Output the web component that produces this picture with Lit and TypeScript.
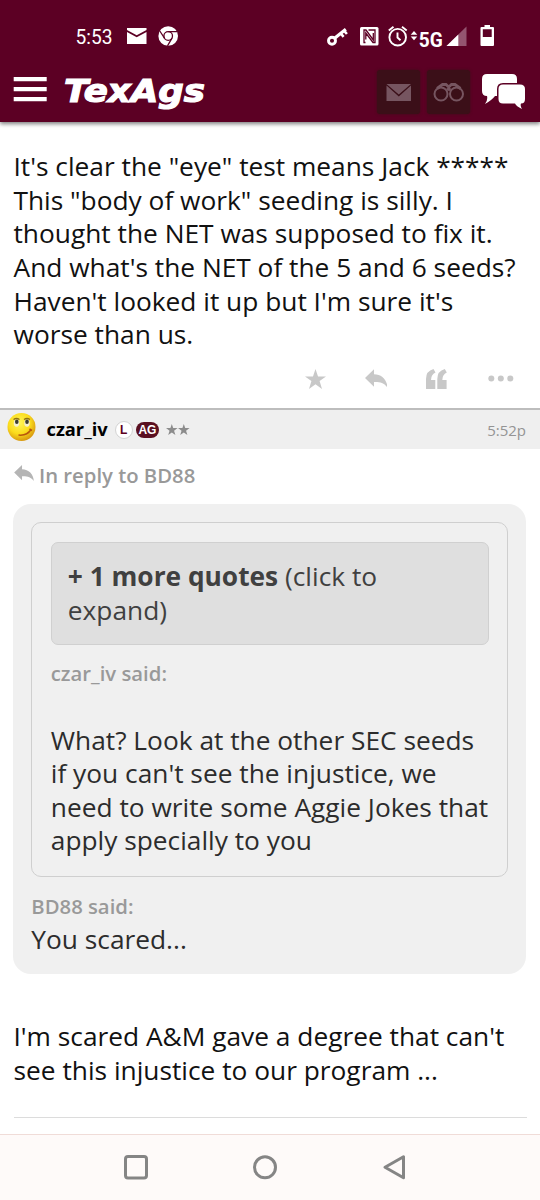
import { LitElement, html, css } from "lit";
import { customElement } from "lit/decorators.js";

const REPLY = "M0 8.2 L8.6 0 V4.6 C16 4.8 21 9.5 21.5 17.5 C18.5 13.2 14.5 12 8.6 12.2 V16.6 Z";
const STAR = "M10 0 L12.4 7 H20 L13.9 11.5 L16.2 19 L10 14.5 L3.8 19 L6.1 11.5 L0 7 H7.6 Z";

const lines = (items: string[]) => items.map((t) => html`<div class="line">${t}</div>`);

@customElement("status-bar")
class StatusBar extends LitElement {
  static styles = css`
    :host { display: block; height: 70px; }
    svg { display: block; }
    .t { font-family: Roboto, sans-serif; fill: #fff; }
  `;
  render() {
    return html`<svg width="540" height="70" viewBox="0 0 540 70" fill="#fff">
      <text class="t" x="75.5" y="43.5" font-size="20" textLength="37" lengthAdjust="spacingAndGlyphs">5:53</text>
      <path d="M127 30 V28 H146.500 V30 L136.700 35.300 Z M127 32 L136.700 37.300 L146.500 32 V44 H127 Z"/>
      <circle cx="168.200" cy="36" r="9.800"/>
      <g fill="none" stroke="#5c0024" stroke-width="1.300">
        <circle cx="168.200" cy="36" r="4.300"/>
        <path d="M168.200 31.700 H177 M164.500 38.200 L159.800 31 M172 38.200 L167.500 45.800"/>
      </g>
      <g fill="none" stroke="#fff">
        <circle cx="332" cy="40.700" r="3.500" stroke-width="2.900"/>
        <path d="M334.600 38.300 L345.800 29.200" stroke-width="3.200"/>
        <path d="M340.800 33.500 L343.600 36.800 M344.200 30.900 L346.900 34" stroke-width="2.600"/>
      </g>
      <rect x="360" y="27" width="18.500" height="18.500" rx="1.500"/>
      <path d="M365.500 42.500 H364 V30 H366 L373.300 40 V33 M368.500 30 H375 V42.500 H373 L365.800 33 V39.500" fill="none" stroke="#5c0024" stroke-width="1.300"/>
      <g fill="none" stroke="#fff" stroke-width="1.900">
        <circle cx="397.700" cy="37.200" r="8.300"/>
        <path d="M397.500 32.500 V37.500 L400.500 40.200 M388.800 30.500 L393.500 26.800 M406.700 30.500 L402 26.800"/>
      </g>
      <path d="M410.700 34.800 L414 31 L417.300 34.800 Z M410.700 36.400 L414 40.200 L417.300 36.400 Z"/>
      <text class="t" x="418.800" y="46.500" font-size="21" font-weight="700" textLength="24" lengthAdjust="spacingAndGlyphs">5G</text>
      <path d="M466.500 26.500 V46 H446.500 Z" fill="#945570"/>
      <path d="M458.300 34.500 V46 H446.500 Z"/>
      <path d="M484.500 25 H490 V27 H493 Q494 27 494 28 V45 Q494 46 493 46 H481.500 Q480.500 46 480.500 45 V28 Q480.500 27 481.500 27 H484.500 Z M482.800 29.300 V37 H491.700 V29.300 Z" fill-rule="evenodd"/>
    </svg>`;
  }
}

@customElement("site-header")
class SiteHeader extends LitElement {
  static styles = css`
    :host { display: flex; height: 52px; box-sizing: border-box; }
    svg { display: block; flex: none; }
    .menu { margin: 7px 0 0 13px; }
    .logo { margin-left: 17px; overflow: visible; }
    .word { font: italic bold 32px "DejaVu Sans", sans-serif; fill: #fff; stroke: #fff; stroke-width: 1.200px; }
    .btn { width: 43px; height: 44px; background: #3b0f18; border-radius: 3px; box-shadow: 0 0 3px #3b0f18; }
    .mail { margin-left: auto; }
    .binoc { margin-left: 6.500px; }
    .chat { margin: 4px 15.500px 0 12px; }
  `;
  render() {
    return html`
      <svg class="menu" width="34" height="26" fill="#fff"><path d="M.7 0 h33 v4.300 h-33z M.7 10 h33 v4.300 h-33z M.7 20 h33 v4.300 h-33z"/></svg>
      <svg class="logo" width="142" height="48"><text class="word" x="0" y="32" textLength="141" lengthAdjust="spacingAndGlyphs">TexAgs</text></svg>
      <svg class="btn mail" viewBox="0 0 43 44"><path d="M9.500 14 H34 L21.800 24.500 Z M9.500 15.500 L21.800 26.500 L34 15.500 V31 H9.500 Z" fill="#765560"/></svg>
      <svg class="btn binoc" viewBox="0 0 43 44"><g fill="none" stroke="#765560" stroke-width="2"><circle cx="14" cy="24" r="6.500"/><circle cx="29.500" cy="24" r="6.500"/><path d="M10 18.500 L15.500 14.500 H19 L21.700 17 L24.500 14.500 H28 L33.500 18.500 M20 20 Q21.700 18.500 23.500 20" stroke-width="2.800"/></g></svg>
      <svg class="chat" width="43" height="36" fill="#fff">
        <path d="M5 0 H30 Q35 0 35 5 V17 Q35 22 30 22 H13 Q10 26 3 30 Q6 26 5 22 Q0 22 0 17 V5 Q0 0 5 0 Z"/>
        <path d="M21 10.500 H38 Q43 10.500 43 15 V25 Q43 29.500 39 29.500 Q38 32 40 35 Q34 32 33 29.500 H21 Q16.500 29.500 16.500 25 V15 Q16.500 10.500 21 10.500 Z" stroke="#5c0024" stroke-width="3" paint-order="stroke"/>
      </svg>`;
  }
}

@customElement("nav-bar")
class NavBar extends LitElement {
  static styles = css`
    :host { display: flex; height: 66px; box-sizing: border-box; border-top: 1px solid #f0dcd8; background: #fefaf9; }
    svg { display: block; }
  `;
  render() {
    return html`<svg width="540" height="65" fill="none" stroke="#858585" stroke-width="3">
      <rect x="125.500" y="21.500" width="21" height="21.500" rx="2.500"/>
      <circle cx="265" cy="32.300" r="10.500"/>
      <path d="M385 32.300 L403.500 21.800 V42.800 Z" stroke-linejoin="round"/>
    </svg>`;
  }
}

@customElement("app-root")
class AppRoot extends LitElement {
  static styles = css`
    :host { display: flex; flex-direction: column; height: 1200px; background: #fff; overflow: hidden; font-family: "Open Sans", "Noto Sans", sans-serif; color: #111; font-size: 26.300px; }
    .top { background: #5c0024; height: 122px; box-shadow: 0 2px 4px rgba(0,0,0,.5); }
    .line { height: 33.600px; line-height: 33.600px; white-space: nowrap; }
    .post { padding: 28.300px 13.500px 0; height: 246px; box-sizing: border-box; }
    .actions { display: flex; justify-content: flex-end; align-items: center; height: 21px; padding: 0 26px 19px 0; fill: #c8c8c8; }
    .actions svg { display: block; }
    .a1 { margin-left: 39px; }
    .a2 { margin-left: 39px; }
    .a3 { margin-left: 41px; }
    .user { display: flex; align-items: center; height: 41px; box-sizing: border-box; border-top: 2px solid #bdbdbd; background: #efefef; padding: 0 14px 0 7px; }
    .face { margin-bottom: 5px; }
    .name { font-size: 18.300px; font-weight: 700; color: #000; margin: 0 0 2px 10.500px; }
    .badge { display: flex; align-items: center; justify-content: center; height: 16px; font: bold 12px "Liberation Sans", sans-serif; border-radius: 9px; box-sizing: border-box; }
    .l { width: 18px; height: 18px; margin-left: 7px; background: #fff; border: 1px solid #d3d3d3; color: #5c0020; }
    .ag { width: 23.500px; margin-left: 3px; background: #5a0f20; color: #fff; }
    .stars { margin-left: 7px; fill: #8c8c8c; }
    .time { margin-left: auto; font-size: 15px; color: #949494; }
    .reply { display: flex; height: 55px; padding: 0 13.500px; box-sizing: border-box; font-size: 20.300px; font-weight: 600; line-height: 53px; color: #999; }
    .reply svg { margin: 16px 5.500px 0 0; fill: #b5b5b5; }
    .quote { margin: 0 14px 0 13.300px; padding: 18px 18px 0; height: 470px; box-sizing: border-box; border-radius: 18px; background: #f0f0f0; color: #2c2c2c; }
    .inner { height: 355px; box-sizing: border-box; border: 1px solid #cfcfcf; border-radius: 10px; padding: 19px 18.500px 0; }
    .more { height: 103px; box-sizing: border-box; border: 1px solid #d0d0d0; border-radius: 7px; background: #dfdfdf; padding: 17px 16px 0; color: #404040; }
    .said { font-size: 20.300px; font-weight: 600; color: #999; height: 28px; line-height: 28px; }
    .s1 { margin: 14px 0 36.500px; }
    .s2 { margin: 14.500px 0 3px; }
    .answer { margin: 46px 13.500px 0; height: 98px; box-sizing: border-box; border-bottom: 1px solid #dcdcdc; }
    nav-bar { margin-top: auto; }
  `;
  render() {
    return html`
      <div class="top"><status-bar></status-bar><site-header></site-header></div>
      <div class="post">
        ${lines(["It's clear the \"eye\" test means Jack *****", "This \"body of work\" seeding is silly. I", "thought the NET was supposed to fix it.", "And what's the NET of the 5 and 6 seeds?", "Haven't looked it up but I'm sure it's", "worse than us."])}
      </div>
      <div class="actions">
        <svg width="21" height="20" viewBox="0 0 20 19"><path d=${STAR}/></svg>
        <svg class="a1" width="22.500" height="19" viewBox="0 0 21.500 17.500"><path d=${REPLY}/></svg>
        <svg class="a2" width="21" height="20"><path d="M0 20 V10 Q0 2 7.500 0 L9.500 3.500 Q5 5.500 5 11 H9.300 V20 Z M11.300 20 V10 Q11.300 2 18.800 0 L20.800 3.500 Q16.300 5.500 16.300 11 H20.600 V20 Z"/></svg>
        <svg class="a3" width="26" height="7"><circle cx="3.300" cy="3.500" r="3"/><circle cx="12.800" cy="3.500" r="3"/><circle cx="22.300" cy="3.500" r="3"/></svg>
      </div>
      <div class="user">
        <svg class="face" width="29" height="30" viewBox="0 0 29 30">
          <defs><radialGradient id="f" cx="42%" cy="35%" r="65%"><stop offset="0" stop-color="#fff65a"/><stop offset=".6" stop-color="#fbdc1c"/><stop offset="1" stop-color="#d99a10"/></radialGradient></defs>
          <circle cx="14.500" cy="15" r="14" fill="url(#f)"/>
          <g fill="#f4efd0"><ellipse cx="9.500" cy="11" rx="2.700" ry="3.800"/><ellipse cx="20" cy="11" rx="2.700" ry="3.800"/></g>
          <g fill="#3c3c30"><ellipse cx="9.800" cy="9.800" rx="1.800" ry="2.300"/><ellipse cx="20" cy="9.800" rx="1.800" ry="2.300"/></g>
          <path d="M6.500 7.500 Q9.500 5.500 12.500 7.500 M17 7.500 Q20 5.500 23 7.500" fill="none" stroke="#8f7210" stroke-width="1.300"/>
          <path d="M11.500 23 Q20 24 24 17.500 M22.500 17 L25 18.500" fill="none" stroke="#b8560c" stroke-width="1.500"/>
        </svg>
        <span class="name">czar_iv</span><span class="badge l">L</span><span class="badge ag">AG</span>
        <svg class="stars" width="24" height="12"><path d=${STAR} transform="scale(.58)"/><path d=${STAR} transform="translate(12) scale(.58)"/></svg>
        <span class="time">5:52p</span>
      </div>
      <div class="reply"><svg width="20" height="16" viewBox="0 0 21.500 17.500"><path d=${REPLY}/></svg>In reply to BD88</div>
      <div class="quote">
        <div class="inner">
          <div class="more"><div class="line"><b>+ 1 more quotes</b> (click to</div><div class="line">expand)</div></div>
          <div class="said s1">czar_iv said:</div>
          ${lines(["What? Look at the other SEC seeds", "if you can't see the injustice, we", "need to write some Aggie Jokes that", "apply specially to you"])}
        </div>
        <div class="said s2">BD88 said:</div>
        <div class="line">You scared...</div>
      </div>
      <div class="answer">${lines(["I'm scared A&M gave a degree that can't", "see this injustice to our program ..."])}</div>
      <nav-bar></nav-bar>`;
  }
}
